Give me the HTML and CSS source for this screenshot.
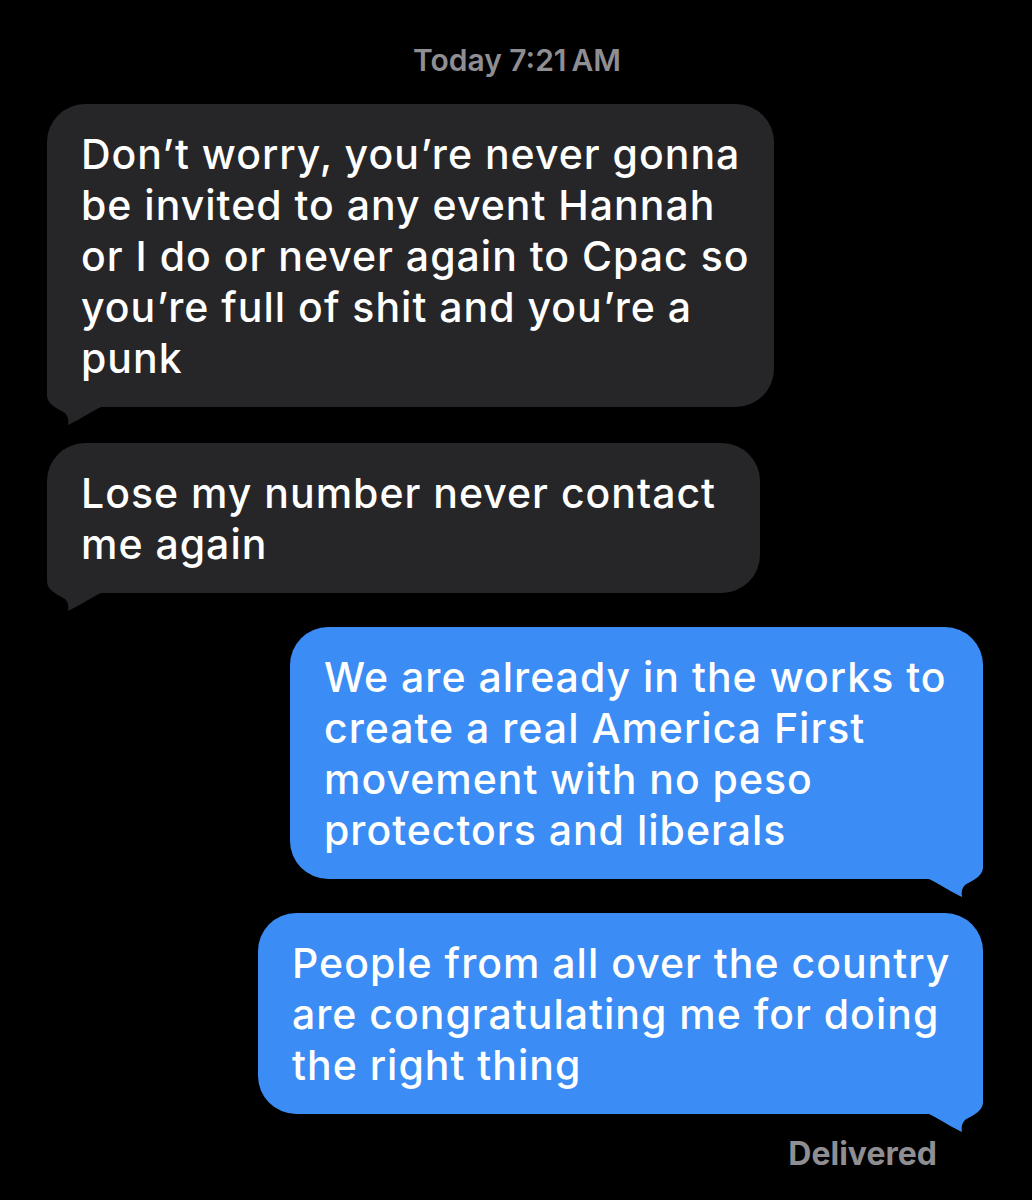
FILE: index.html
```html
<!DOCTYPE html>
<html>
<head>
<meta charset="utf-8">
<link rel="stylesheet" href="styles.css">
</head>
<body>
<div class="thread">
  <div class="stamp"><span class="day">Today</span> 7:21&#8201;AM</div>

  <div class="bubble in b1">
    <svg class="tail tail-in" viewBox="0 -45 60 65" width="60" height="65"><path d="M0,-45 L0,-12 C0,-2 12,2 18,6 C21,9 22,13 21,18 C30,14 42,6 54,0 L54,-45 Z"/></svg>
    <p>Don’t worry, you’re never gonna<br>be invited to any event Hannah<br>or I do or never again to Cpac so<br>you’re full of shit and you’re a<br>punk</p>
  </div>

  <div class="bubble in b2">
    <svg class="tail tail-in" viewBox="0 -45 60 65" width="60" height="65"><path d="M0,-45 L0,-12 C0,-2 12,2 18,6 C21,9 22,13 21,18 C30,14 42,6 54,0 L54,-45 Z"/></svg>
    <p>Lose my number never contact<br>me again</p>
  </div>

  <div class="bubble out b3">
    <svg class="tail tail-out" viewBox="-60 -45 60 65" width="60" height="65"><path d="M0,-45 L0,-12 C0,-2 -12,2 -18,6 C-21,9 -22,13 -21,18 C-30,14 -42,6 -54,0 L-54,-45 Z"/></svg>
    <p>We are already in the works to<br>create a real America First<br>movement with no peso<br>protectors and liberals</p>
  </div>

  <div class="bubble out b4">
    <svg class="tail tail-out" viewBox="-60 -45 60 65" width="60" height="65"><path d="M0,-45 L0,-12 C0,-2 -12,2 -18,6 C-21,9 -22,13 -21,18 C-30,14 -42,6 -54,0 L-54,-45 Z"/></svg>
    <p>People from all over the country<br>are congratulating me for doing<br>the right thing</p>
  </div>

  <div class="delivered">Delivered</div>
</div>
</body>
</html>
```
FILE: styles.css
```css
html, body {
  margin: 0;
  padding: 0;
  background: #000;
}

body {
  width: 1032px;
  height: 1200px;
  overflow: hidden;
  font-family: Inter, "Noto Sans", "Liberation Sans", sans-serif;
  -webkit-font-smoothing: antialiased;
}

.thread {
  display: flex;
  flex-direction: column;
  padding-top: 40px;
}

.stamp {
  align-self: center;
  height: 40px;
  line-height: 40px;
  font-size: 30px;
  font-weight: 600;
  color: #8e8e93;
  margin-left: 2px;
}

.bubble {
  position: relative;
  box-sizing: border-box;
  border-radius: 38px;
  padding: 25px 34px 23px;
}

.bubble p {
  position: relative;
  z-index: 1;
  margin: 0;
  font-size: 41px;
  font-weight: 500;
  line-height: 51px;
  color: #ffffff;
  white-space: nowrap;
  letter-spacing: 1px;
}

.in {
  align-self: flex-start;
  margin-left: 47px;
  background: #262628;
}

.out {
  align-self: flex-end;
  margin-right: 49px;
  background: #3b8cf4;
  margin-top: 34px;
}

.b1 {
  width: 727px;
  margin-top: 24px;
}

.b2 {
  width: 713px;
  margin-top: 36px;
}

.b3 {
  width: 693px;
}

.b4 {
  width: 725px;
}

.tail {
  position: absolute;
  bottom: -20px;
  display: block;
  z-index: 0;
}

.tail-in {
  left: 0;
  fill: #262628;
}

.tail-out {
  right: 0;
  fill: #3b8cf4;
}

.delivered {
  align-self: flex-end;
  margin-right: 95px;
  margin-top: 22px;
  height: 36px;
  line-height: 36px;
  font-size: 32px;
  font-weight: 700;
  color: #8e8e93;
}
```
